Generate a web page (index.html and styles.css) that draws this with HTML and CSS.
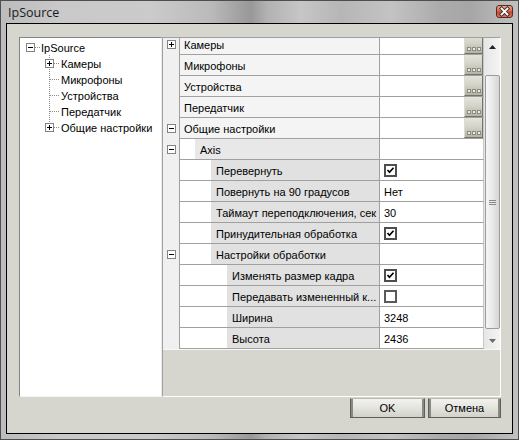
FILE: index.html
```html
<!DOCTYPE html>
<html>
<head>
<meta charset="utf-8">
<title>IpSource</title>
<link rel="stylesheet" href="styles.css">
</head>
<body>
<div class="window">
  <div class="titlebar">
    <span class="title">IpSource</span>
    <span class="close"><svg width="15" height="11" viewBox="0 0 15 11"><path d="M4.5 2.5 L10.5 8.5 M10.5 2.5 L4.5 8.5" stroke="#3a2a28" stroke-width="3.6" stroke-linecap="square"/><path d="M4.5 2.5 L10.5 8.5 M10.5 2.5 L4.5 8.5" stroke="#fff" stroke-width="1.8" stroke-linecap="square"/></svg></span>
  </div>
  <div class="client">
    <div class="main">
      <div class="tree">
        <div class="node root">
          <svg class="exp" width="9" height="9" viewBox="0 0 9 9"><rect x="0.5" y="0.5" width="8" height="8" fill="#fff" stroke="#848484"/><path d="M2 4.5h5" stroke="#000"/></svg>
          <span class="hline w5"></span><span class="ntext">IpSource</span>
        </div>
        <div class="children">
          <div class="node box">
            <svg class="exp" width="9" height="9" viewBox="0 0 9 9"><rect x="0.5" y="0.5" width="8" height="8" fill="#fff" stroke="#848484"/><path d="M2 4.5h5M4.5 2v5" stroke="#000"/></svg>
            <span class="hline w6"></span><span class="ntext">Камеры</span>
          </div>
          <div class="node leaf"><span class="hline w10"></span><span class="ntext">Микрофоны</span></div>
          <div class="node leaf"><span class="hline w10"></span><span class="ntext">Устройства</span></div>
          <div class="node leaf"><span class="hline w10"></span><span class="ntext">Передатчик</span></div>
          <div class="node box">
            <svg class="exp" width="9" height="9" viewBox="0 0 9 9"><rect x="0.5" y="0.5" width="8" height="8" fill="#fff" stroke="#848484"/><path d="M2 4.5h5M4.5 2v5" stroke="#000"/></svg>
            <span class="hline w6"></span><span class="ntext">Общие настройки</span>
          </div>
        </div>
      </div>
      <div class="grid">
        <div class="grid-body">
          <div class="rows-wrap">
            <div class="rows">
              <div class="row l0">
                <div class="gutter"><svg width="9" height="9" viewBox="0 0 9 9"><rect x="0.5" y="0.5" width="8" height="8" fill="#fff" stroke="#848484"/><path d="M2 4.5h5M4.5 2v5" stroke="#000"/></svg></div>
                <div class="name"><div class="label">Камеры</div></div>
                <div class="value"><span class="ellipsis"><i></i><i></i><i></i></span></div>
              </div>
              <div class="row l0">
                <div class="gutter"></div>
                <div class="name"><div class="label">Микрофоны</div></div>
                <div class="value"><span class="ellipsis"><i></i><i></i><i></i></span></div>
              </div>
              <div class="row l0">
                <div class="gutter"></div>
                <div class="name"><div class="label">Устройства</div></div>
                <div class="value"><span class="ellipsis"><i></i><i></i><i></i></span></div>
              </div>
              <div class="row l0">
                <div class="gutter"></div>
                <div class="name"><div class="label">Передатчик</div></div>
                <div class="value"><span class="ellipsis"><i></i><i></i><i></i></span></div>
              </div>
              <div class="row l0">
                <div class="gutter"><svg width="9" height="9" viewBox="0 0 9 9"><rect x="0.5" y="0.5" width="8" height="8" fill="#fff" stroke="#848484"/><path d="M2 4.5h5" stroke="#000"/></svg></div>
                <div class="name"><div class="label">Общие настройки</div></div>
                <div class="value"><span class="ellipsis"><i></i><i></i><i></i></span></div>
              </div>
              <div class="row l1">
                <div class="gutter"><svg width="9" height="9" viewBox="0 0 9 9"><rect x="0.5" y="0.5" width="8" height="8" fill="#fff" stroke="#848484"/><path d="M2 4.5h5" stroke="#000"/></svg></div>
                <div class="name"><div class="label">Axis</div></div>
                <div class="value"></div>
              </div>
              <div class="row l2">
                <div class="gutter"></div>
                <div class="name"><div class="label">Перевернуть</div></div>
                <div class="value"><svg class="check" width="13" height="13" viewBox="0 0 13 13"><rect x="1" y="1" width="11" height="11" fill="#fff" stroke="#4e4e4e" stroke-width="2"/><path d="M3.5 6 L5.5 8.2 L9.5 3.8" fill="none" stroke="#000" stroke-width="1.7"/></svg></div>
              </div>
              <div class="row l2">
                <div class="gutter"></div>
                <div class="name"><div class="label">Повернуть на 90 градусов</div></div>
                <div class="value"><span class="vtext">Нет</span></div>
              </div>
              <div class="row l2">
                <div class="gutter"></div>
                <div class="name"><div class="label">Таймаут переподключения, сек</div></div>
                <div class="value"><span class="vtext">30</span></div>
              </div>
              <div class="row l2">
                <div class="gutter"></div>
                <div class="name"><div class="label">Принудительная обработка</div></div>
                <div class="value"><svg class="check" width="13" height="13" viewBox="0 0 13 13"><rect x="1" y="1" width="11" height="11" fill="#fff" stroke="#4e4e4e" stroke-width="2"/><path d="M3.5 6 L5.5 8.2 L9.5 3.8" fill="none" stroke="#000" stroke-width="1.7"/></svg></div>
              </div>
              <div class="row l2">
                <div class="gutter"><svg width="9" height="9" viewBox="0 0 9 9"><rect x="0.5" y="0.5" width="8" height="8" fill="#fff" stroke="#848484"/><path d="M2 4.5h5" stroke="#000"/></svg></div>
                <div class="name"><div class="label">Настройки обработки</div></div>
                <div class="value"></div>
              </div>
              <div class="row l3">
                <div class="gutter"></div>
                <div class="name"><div class="label">Изменять размер кадра</div></div>
                <div class="value"><svg class="check" width="13" height="13" viewBox="0 0 13 13"><rect x="1" y="1" width="11" height="11" fill="#fff" stroke="#4e4e4e" stroke-width="2"/><path d="M3.5 6 L5.5 8.2 L9.5 3.8" fill="none" stroke="#000" stroke-width="1.7"/></svg></div>
              </div>
              <div class="row l3">
                <div class="gutter"></div>
                <div class="name"><div class="label">Передавать измененный к...</div></div>
                <div class="value"><svg class="check" width="13" height="13" viewBox="0 0 13 13"><rect x="1" y="1" width="11" height="11" fill="#fff" stroke="#5a5a5a" stroke-width="2"/></svg></div>
              </div>
              <div class="row l3">
                <div class="gutter"></div>
                <div class="name"><div class="label">Ширина</div></div>
                <div class="value"><span class="vtext">3248</span></div>
              </div>
              <div class="row l3">
                <div class="gutter"></div>
                <div class="name"><div class="label">Высота</div></div>
                <div class="value"><span class="vtext">2436</span></div>
              </div>
            </div>
          </div>
          <div class="scrollbar">
            <div class="sb-btn"><svg width="7" height="4" viewBox="0 0 7 4"><path d="M0 4 L3.5 0 L7 4Z" fill="#222"/></svg></div>
            <div class="sb-track top"></div>
            <div class="sb-thumb"><span class="grip"></span></div>
            <div class="sb-track bottom"></div>
            <div class="sb-btn"><svg width="7" height="4" viewBox="0 0 7 4"><path d="M0 0 L3.5 4 L7 0Z" fill="#6a6a6a"/></svg></div>
          </div>
        </div>
        <div class="desc"></div>
      </div>
    </div>
    <div class="buttons">
      <button class="btn ok">OK</button>
      <button class="btn cancel">Отмена</button>
    </div>
  </div>
</div>
</body>
</html>
```

FILE: styles.css
```css
* { box-sizing: border-box; }

body {
  margin: 0;
  font-family: "Liberation Sans", Arial, sans-serif;
  font-size: 11px;
  color: #000;
}

.window {
  width: 519px;
  height: 440px;
  border: 1px solid #4e4e4e;
  padding: 0 5px 5px;
  display: flex;
  flex-direction: column;
  background: linear-gradient(to right, #bcbcbc 0, #c9c9c9 60px, #cbcbcb 150px, #bababa 210px, #a2a2a2 238px, #989898 250px, #b2b2b2 266px, #c6c6c6 300px, #b6b6b6 340px, #c3c3c3 390px, #ababab 440px, #a6a6a6 470px, #c2c2c2 519px);
}

.titlebar {
  height: 22px;
  display: flex;
  align-items: center;
  justify-content: space-between;
}

.title {
  font-family: "Open Sans", "Noto Sans", sans-serif;
  font-size: 12.5px;
  color: #1a1a1a;
  padding-left: 2px;
  margin-top: 1px;
}

.close {
  align-self: flex-start;
  margin-top: 4px;
  width: 17px;
  height: 13px;
  border: 1px solid #5a2a22;
  border-radius: 3px;
  background: linear-gradient(#eba48f, #d86a50 45%, #c4452a 55%, #dc7a5e);
  display: flex;
  align-items: center;
  justify-content: center;
}

.client {
  flex: 1;
  border: 1px solid #000;
  background: #d6d6ce;
  padding: 13px 11px 0 12px;
  display: flex;
  flex-direction: column;
}

.main {
  display: flex;
  height: 360px;
}

/* Tree */
.tree {
  width: 143px;
  background: #fff;
  border: 1px solid;
  border-color: #838383 #ececec #f4f4f4 #838383;
  padding-top: 1px;
}

.node {
  height: 16px;
  display: flex;
  align-items: center;
  white-space: nowrap;
}

.node.root { padding-left: 6px; }
.node.box { padding-left: 25px; }
.node.leaf { padding-left: 30px; }

.exp { flex: none; }

.hline {
  height: 1px;
  flex: none;
  background: repeating-linear-gradient(to right, #8a8a8a 0 1px, transparent 1px 2px);
}
.w5 { width: 5px; }
.w6 { width: 6px; }
.w10 { width: 10px; }

.ntext {
  margin-left: 1px;
  padding-top: 2px;
}

.children {
  background: repeating-linear-gradient(to bottom, #8a8a8a 0 1px, transparent 1px 2px) no-repeat 29px 0 / 1px calc(100% - 8px);
}

/* Property grid */
.grid {
  width: 339px;
  border: 1px solid;
  border-color: #a0a0a0 #fff #fff #a0a0a0;
  display: flex;
  flex-direction: column;
}

.grid-body {
  height: 311px;
  display: flex;
}

.rows-wrap {
  flex: 1;
  overflow: hidden;
}

.rows { margin-top: -4px; }

.row {
  display: grid;
  grid-template-columns: 17px 200px 104px;
  height: 21px;
}

.gutter {
  background: #f0f0f0;
  border-right: 1px solid #a0a0a0;
  display: flex;
  align-items: center;
  padding-left: 4px;
}

.name {
  background: #fff;
  border-right: 1px solid #a0a0a0;
  border-bottom: 1px solid #a0a0a0;
  display: flex;
  overflow: hidden;
}

.label {
  flex: 1;
  background: #e1e1e1;
  padding-left: 5px;
  padding-top: 1px;
  display: flex;
  align-items: center;
  white-space: nowrap;
  overflow: hidden;
}

.l0 .label { background: #f4f4f4; padding-left: 4px; }
.l1 .label { margin-left: 15px; background: #e8e8e8; }
.l2 .label { margin-left: 31px; }
.l3 .label { margin-left: 47px; }

.value {
  background: #fff;
  border-bottom: 1px solid #a0a0a0;
  border-right: 1px solid #c8c8c8;
  display: flex;
  align-items: center;
  padding-left: 4px;
  white-space: nowrap;
}

.vtext { padding-top: 1px; }

.check { flex: none; }

.ellipsis {
  margin-left: auto;
  width: 19px;
  align-self: stretch;
  border-right: 1px solid #74746a;
  border-bottom: 1px solid #74746a;
  border-left: 1px solid #dcdcd4;
  background: linear-gradient(#e4e4dc, #d4d4ca 45%, #b4b4a6);
  display: flex;
  align-items: flex-end;
  justify-content: center;
  gap: 1px;
  padding-bottom: 2px;
}

.ellipsis i {
  width: 4px;
  height: 4px;
  border: 1px solid #8c8c80;
  background: #ecece6;
}

/* Scrollbar */
.scrollbar {
  width: 16px;
  display: flex;
  flex-direction: column;
  background: linear-gradient(to right, #e6e6e6, #f4f4f4);
}

.sb-btn {
  height: 17px;
  display: flex;
  align-items: center;
  justify-content: center;
  flex: none;
}

.sb-track.top { height: 20px; }
.sb-track.bottom { flex: 1; }

.sb-thumb {
  height: 254px;
  margin: 0 0 0 1px;
  border: 1px solid #9c9c9c;
  border-radius: 2px;
  background: linear-gradient(to right, #f6f6f6, #e8e8e8 50%, #d6d6d6);
  display: flex;
  align-items: center;
  justify-content: center;
}

.grip {
  width: 7px;
  height: 5px;
  background: repeating-linear-gradient(to bottom, #8a8a8a 0 1px, transparent 1px 2px);
}

.desc {
  flex: 1;
  border-top: 1px solid #f8f8f8;
  background: #d6d6ce;
}

/* Buttons */
.buttons {
  display: flex;
  justify-content: flex-end;
  gap: 3px;
  margin-top: 1px;
}

.btn {
  height: 20px;
  padding: 0;
  font-family: "Liberation Sans", Arial, sans-serif;
  font-size: 11px;
  color: #000;
  border: 1px solid #5e5e5a;
  border-top-color: #b8b8b0;
  background: linear-gradient(#f2f2ee, #e6e6e0 45%, #d2d2ca);
  box-shadow: inset 2px 0 #8a8a84, inset -2px 0 #8a8a84;
}

.ok { width: 75px; }
.cancel { width: 73px; }
```
